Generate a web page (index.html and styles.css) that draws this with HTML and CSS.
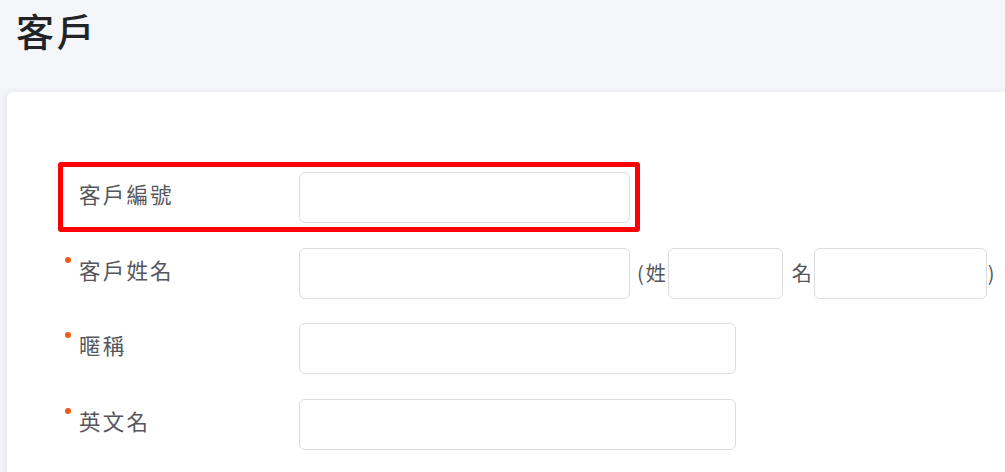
FILE: index.html
```html
<!DOCTYPE html>
<html lang="zh-Hant">
<head>
<meta charset="utf-8">
<title>客戶</title>
<link rel="stylesheet" href="styles.css">
</head>
<body>
<header class="page-header">
  <h1 class="page-title">客戶</h1>
</header>
<main class="card">
  <form class="form">
    <div class="row row-highlight">
      <label class="label">客戶編號</label>
      <input class="input input-md" type="text">
    </div>
    <div class="row">
      <label class="label required">客戶姓名</label>
      <input class="input input-md" type="text">
      <span class="paren-open">(姓</span>
      <input class="input input-last" type="text">
      <span class="name-word">名</span>
      <input class="input input-first" type="text">
      <span class="paren-close">)</span>
    </div>
    <div class="row row-tight">
      <label class="label required">暱稱</label>
      <input class="input input-lg" type="text">
    </div>
    <div class="row">
      <label class="label required">英文名</label>
      <input class="input input-lg" type="text">
    </div>
  </form>
</main>
</body>
</html>
```
FILE: styles.css
```css
* { box-sizing: border-box; }
html, body { height: 100%; }
body {
  margin: 0;
  background: #f5f6fa;
  font-family: "Noto Sans CJK TC", "Noto Sans", sans-serif;
  overflow: hidden;
}
.page-header {
  height: 92px;
  padding: 6px 0 0 16px;
}
.page-title {
  margin: 0;
  font-size: 38px;
  line-height: 48px;
  font-weight: 500;
  letter-spacing: 2.5px;
  color: #222327;
}
.card {
  margin-left: 7px;
  background: #fff;
  border-radius: 6px 0 0 0;
  min-height: 500px;
  box-shadow: -2px 0 6px rgba(40, 50, 90, 0.08);
}
.form {
  padding: 70px 0 0 51px;
  display: flex;
  flex-direction: column;
  gap: 6px;
}
.row {
  display: flex;
  align-items: flex-start;
  width: fit-content;
  padding: 5px 5px 4px 0;
  border: 5px solid transparent;
  border-radius: 3px;
}
.row-tight { margin-top: -1px; }
.row-highlight {
  border-color: #ff0000;
}
.label {
  position: relative;
  width: 236px;
  flex: none;
  padding-left: 16px;
  font-size: 21.5px;
  line-height: 44px;
  letter-spacing: 2.2px;
  color: #55565c;
}
.label.required::before {
  content: "";
  position: absolute;
  left: 2px;
  top: 9px;
  width: 6px;
  height: 6px;
  border-radius: 50%;
  background: #ef5a14;
}
.input {
  height: 51px;
  border: 1px solid #dcdde3;
  border-radius: 6px;
  background: #fff;
  outline: none;
  flex: none;
}
.input-md { width: 331px; }
.input-lg { width: 437px; }
.input-last { width: 115px; }
.input-first { width: 173px; }
.paren-open,
.name-word,
.paren-close {
  font-size: 20px;
  line-height: 50px;
  color: #55565c;
}
.paren-open { margin-left: 7px; letter-spacing: 2px; }
.name-word { margin-left: 9px; margin-right: 2px; }
.paren-close { margin-left: 1px; }
```
